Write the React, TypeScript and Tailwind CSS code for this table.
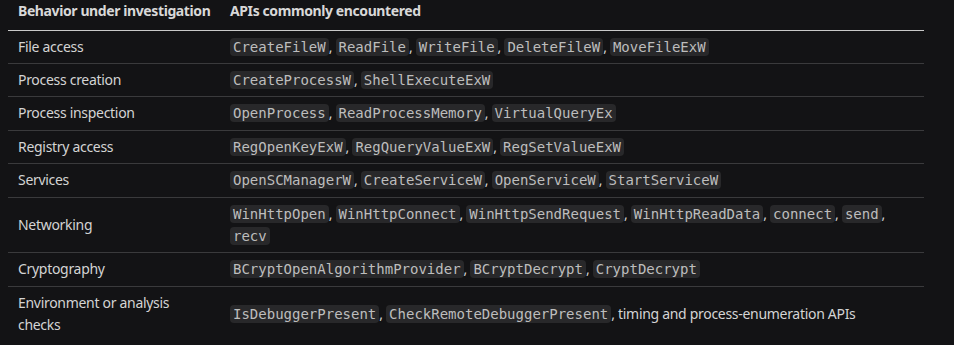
import React from "react";

type Part = string | { c: string };

const rows: { label: string; parts: Part[] }[] = [
  {
    label: "File access",
    parts: [{ c: "CreateFileW" }, ", ", { c: "ReadFile" }, ", ", { c: "WriteFile" }, ", ", { c: "DeleteFileW" }, ", ", { c: "MoveFileExW" }],
  },
  { label: "Process creation", parts: [{ c: "CreateProcessW" }, ", ", { c: "ShellExecuteExW" }] },
  {
    label: "Process inspection",
    parts: [{ c: "OpenProcess" }, ", ", { c: "ReadProcessMemory" }, ", ", { c: "VirtualQueryEx" }],
  },
  {
    label: "Registry access",
    parts: [{ c: "RegOpenKeyExW" }, ", ", { c: "RegQueryValueExW" }, ", ", { c: "RegSetValueExW" }],
  },
  {
    label: "Services",
    parts: [{ c: "OpenSCManagerW" }, ", ", { c: "CreateServiceW" }, ", ", { c: "OpenServiceW" }, ", ", { c: "StartServiceW" }],
  },
  {
    label: "Networking",
    parts: [
      { c: "WinHttpOpen" }, ", ", { c: "WinHttpConnect" }, ", ", { c: "WinHttpSendRequest" }, ", ",
      { c: "WinHttpReadData" }, ", ", { c: "connect" }, ", ", { c: "send" }, ", ", { c: "recv" },
    ],
  },
  {
    label: "Cryptography",
    parts: [{ c: "BCryptOpenAlgorithmProvider" }, ", ", { c: "BCryptDecrypt" }, ", ", { c: "CryptDecrypt" }],
  },
  {
    label: "Environment or analysis checks",
    parts: [{ c: "IsDebuggerPresent" }, ", ", { c: "CheckRemoteDebuggerPresent" }, ", timing and process-enumeration APIs"],
  },
];

function Code({ children }: { children: React.ReactNode }) {
  return (
    <code className="rounded-[4px] bg-[#28282a] px-[3px] py-[1px] text-[14px] tracking-normal text-[#bdbdbd] [font-family:'DejaVu_Sans_Mono',monospace]">
      {children}
    </code>
  );
}

export default function App() {
  return (
    <div className="h-[345px] w-[954px] overflow-hidden bg-[#131315] pl-[8px] text-[14px] tracking-[-0.3px] text-[#d4d4d4] [font-family:'Noto_Sans',sans-serif]">
      <table className="w-[916px] table-fixed border-collapse">
        <colgroup>
          <col className="w-[212px]" />
          <col />
        </colgroup>
        <thead>
          <tr className="border-b border-[#c9c9c9]">
            <th className="h-[30px] whitespace-nowrap px-[10px] pt-0 pb-[7px] text-left align-top font-bold leading-[22.4px] tracking-[-0.4px] text-[#d8d8d8]">
              Behavior under investigation
            </th>
            <th className="h-[30px] whitespace-nowrap px-[10px] pt-0 pb-[7px] text-left align-top font-bold leading-[22.4px] tracking-[-0.4px] text-[#d8d8d8]">
              APIs commonly encountered
            </th>
          </tr>
        </thead>
        <tbody>
          {rows.map((r, i) => (
            <tr key={i} className={i < rows.length - 1 ? "border-b border-[#3a3a3c]" : ""}>
              <td className="px-[10px] py-[5px] align-middle leading-[22.4px]">{r.label}</td>
              <td className="px-[10px] py-[5px] align-middle leading-[22.4px]">
                {r.parts.map((p, j) =>
                  typeof p === "string" ? <React.Fragment key={j}>{p}</React.Fragment> : <Code key={j}>{p.c}</Code>
                )}
              </td>
            </tr>
          ))}
        </tbody>
      </table>
    </div>
  );
}
